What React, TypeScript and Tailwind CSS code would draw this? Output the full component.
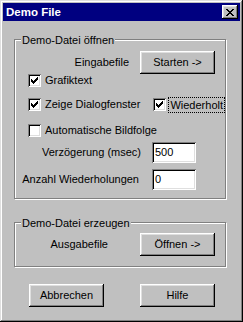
import React from 'react'

const CHECK = ['......#', '.....##', '#...###', '##.###.', '#####..', '.###...', '..#....']
const CROSS = ['##....##', '.##..##.', '..####..', '...##...', '..####..', '.##..##.', '##....##']

function Pixels({ rows }: { rows: string[] }) {
  const w = rows[0].length
  const h = rows.length
  let d = ''
  rows.forEach((row, y) => {
    row.split('').forEach((c, x) => {
      if (c === '#') d += `M${x} ${y}h1v1h-1z`
    })
  })
  return (
    <svg width={w} height={h} viewBox={`0 0 ${w} ${h}`} shapeRendering="crispEdges">
      <path d={d} fill="#000" />
    </svg>
  )
}

function Button({ children }: { children: React.ReactNode }) {
  return (
    <button className="w-[75px] h-[23px] shrink-0 bg-[#c0c0c0] shadow-[inset_-1px_-1px_0_#000,inset_1px_1px_0_#fff,inset_-2px_-2px_0_#808080,inset_2px_2px_0_#dfdfdf] flex items-center justify-center text-black">
      {children}
    </button>
  )
}

function CheckBox({ checked }: { checked?: boolean }) {
  return (
    <span className="w-[13px] h-[13px] shrink-0 bg-white shadow-[inset_1px_1px_0_#808080,inset_-1px_-1px_0_#fff,inset_2px_2px_0_#000,inset_-2px_-2px_0_#dfdfdf] flex items-center justify-center">
      {checked && <Pixels rows={CHECK} />}
    </span>
  )
}

function Field({ value }: { value: string }) {
  return (
    <div className="w-[44px] h-[21px] shrink-0 bg-white shadow-[inset_1px_1px_0_#808080,inset_-1px_-1px_0_#fff,inset_2px_2px_0_#000,inset_-2px_-2px_0_#dfdfdf] flex items-center pl-[3px]">
      {value}
    </div>
  )
}

function GroupBox({
  label,
  className,
  children,
}: {
  label: string
  className: string
  children: React.ReactNode
}) {
  return (
    <div
      className={
        'relative border border-[#808080] shadow-[1px_1px_0_#fff,inset_1px_1px_0_#fff] ' +
        className
      }
    >
      <span className="absolute left-[6px] top-[-6px] px-[1px] bg-[#c0c0c0]">{label}</span>
      {children}
    </div>
  )
}

export default function App() {
  return (
    <div className="w-[243px] h-[322px] bg-[#c0c0c0] shadow-[inset_-1px_-1px_0_#000,inset_1px_1px_0_#dfdfdf,inset_-2px_-2px_0_#808080,inset_2px_2px_0_#fff] p-[3px] font-['Liberation_Sans',Arial,sans-serif] text-[11px] leading-[13px] text-black">
      {/* Title bar */}
      <div className="h-[18px] bg-[#000080] flex items-center justify-between pl-[3px] pr-[2px]">
        <span className="text-white font-bold text-[11.5px]">Demo File</span>
        <div className="w-[16px] h-[14px] bg-[#c0c0c0] shadow-[inset_-1px_-1px_0_#000,inset_1px_1px_0_#fff,inset_-2px_-2px_0_#808080,inset_2px_2px_0_#dfdfdf] flex items-center justify-center">
          <Pixels rows={CROSS} />
        </div>
      </div>

      {/* Demo-Datei öffnen */}
      <GroupBox label="Demo-Datei öffnen" className="ml-[11px] mt-[18px] w-[212px] h-[160px] pt-[11px]">
        <div className="flex items-center">
          <span className="w-[114px] text-right">Eingabefile</span>
          <div className="ml-[11px]">
            <Button>Starten -&gt;</Button>
          </div>
        </div>
        <div className="flex items-center h-[13px] pl-[13px] gap-[4px]">
          <CheckBox checked />
          <span>Grafiktext</span>
        </div>
        <div className="flex items-center h-[13px] pl-[13px] mt-[11px]">
          <div className="w-[126px] flex items-center gap-[4px]">
            <CheckBox checked />
            <span>Zeige Dialogfenster</span>
          </div>
          <div className="flex items-center gap-[2px]">
            <CheckBox checked />
            <span className="border border-dotted border-black px-[1px] leading-[14px]">Wiederholt</span>
          </div>
        </div>
        <div className="flex items-center h-[13px] pl-[13px] gap-[4px] mt-[13px]">
          <CheckBox />
          <span>Automatische Bildfolge</span>
        </div>
        <div className="flex items-center mt-[5px]">
          <span className="w-[126px] text-right">Verzögerung (msec)</span>
          <div className="ml-[11px]">
            <Field value="500" />
          </div>
        </div>
        <div className="flex items-center mt-[6px]">
          <span className="w-[124px] text-right">Anzahl Wiederholungen</span>
          <div className="ml-[13px]">
            <Field value="0" />
          </div>
        </div>
      </GroupBox>

      {/* Demo-Datei erzeugen */}
      <GroupBox label="Demo-Datei erzeugen" className="ml-[11px] mt-[23px] w-[212px] h-[45px] pt-[10px]">
        <div className="flex items-center">
          <span className="w-[93px] text-right">Ausgabefile</span>
          <div className="ml-[32px]">
            <Button>Öffnen -&gt;</Button>
          </div>
        </div>
      </GroupBox>

      {/* Dialog buttons */}
      <div className="flex ml-[26px] mt-[17px] gap-[36px]">
        <Button>Abbrechen</Button>
        <Button>Hilfe</Button>
      </div>
    </div>
  )
}
